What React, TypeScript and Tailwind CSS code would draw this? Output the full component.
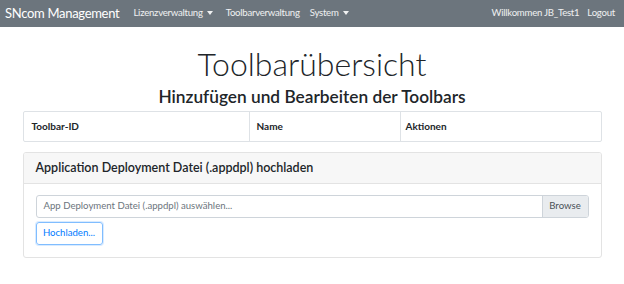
import React from "react";

const Caret = () => (
  <span className="ml-[4px] inline-block h-0 w-0 border-x-[3px] border-t-[4px] border-x-transparent border-t-current align-middle" />
);

export default function App() {
  return (
    <div className="min-h-[284px] bg-white text-[#212529]" style={{ fontFamily: 'Lato, "Open Sans", sans-serif' }}>
      <nav className="flex h-[27px] items-center bg-[#6c757d] pl-[5px] pr-[9px] text-white">
        <span className="text-[13px] leading-none tracking-[-0.3px]">SNcom Management</span>
        <div className="ml-[14px] flex items-center text-[9.6px] tracking-[-0.25px] text-white/90">
          <span className="flex items-center">Lizenzverwaltung<Caret /></span>
          <span className="ml-[13px]">Toolbarverwaltung</span>
          <span className="ml-[10px] flex items-center">System<Caret /></span>
        </div>
        <div className="ml-auto flex items-center gap-[8px] text-[9.6px] tracking-[-0.25px] text-white/90">
          <span>Willkommen JB_Test1</span>
          <span>Logout</span>
        </div>
      </nav>

      <div className="mx-auto w-[579px]">
        <h1 className="mt-[18px] text-center text-[32px] font-light leading-[38px] text-[#212529]">
          Toolbarübersicht
        </h1>
        <h2 className="mt-[4px] text-center text-[17.3px] font-semibold leading-[20px]">
          Hinzufügen und Bearbeiten der Toolbars
        </h2>
        <div className="mt-[4px] grid h-[31px] grid-cols-[226px_151px_1fr] rounded-[2px] border border-[#dee2e6] text-[10px] font-bold">
          <div className="flex items-center border-r border-[#dee2e6] pl-[8px]">Toolbar-ID</div>
          <div className="flex items-center border-r border-[#dee2e6] pl-[7px]">Name</div>
          <div className="flex items-center pl-[5px]">Aktionen</div>
        </div>

        <div className="mt-[10px] overflow-hidden rounded-[3px] border border-[#e3e3e3]">
          <div className="flex h-[31px] items-center border-b border-[#e3e3e3] bg-[#f7f7f7] pl-[12px] text-[12.5px] font-semibold">
            Application Deployment Datei (.appdpl) hochladen
          </div>
          <div className="px-[12px] pb-[12px] pt-[11px]">
            <div className="flex h-[23px] overflow-hidden rounded-[3px] border border-[#ced4da]">
              <div className="flex flex-1 items-center pl-[7px] text-[9.6px] text-[#6c757d]">
                App Deployment Datei (.appdpl) auswählen...
              </div>
              <div className="flex w-[46px] items-center justify-center border-l border-[#ced4da] bg-[#e9ecef] text-[9.6px] text-[#495057]">
                Browse
              </div>
            </div>
            <button className="mt-[4px] flex h-[23px] w-[67px] items-center justify-center rounded-[3px] border border-[#80bdff] text-[9.6px] text-[#007bff] shadow-[0_0_0_1px_rgba(0,123,255,0.15)]">
              Hochladen...
            </button>
          </div>
        </div>
      </div>
    </div>
  );
}
